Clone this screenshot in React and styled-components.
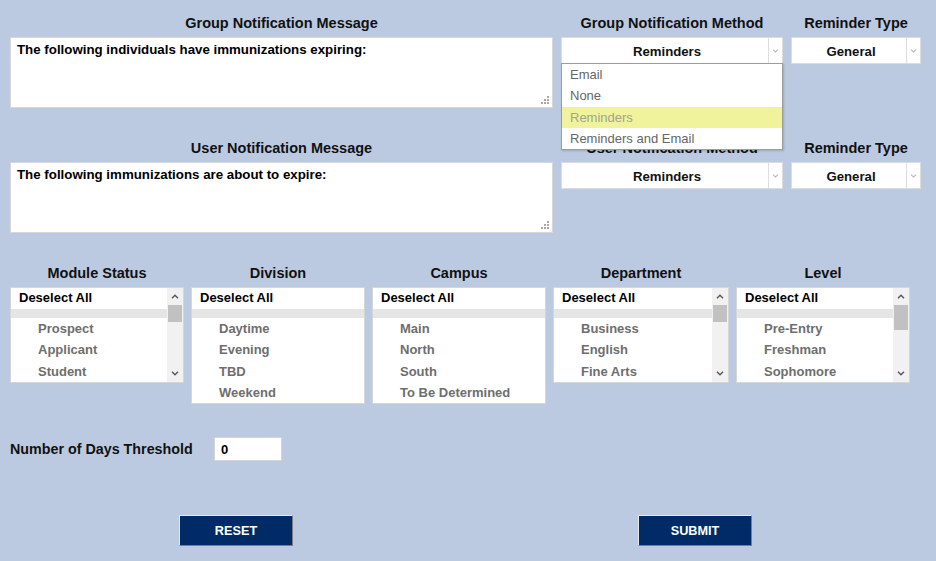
import React from "react";
import styled, { createGlobalStyle } from "styled-components";

const GlobalStyle = createGlobalStyle`
  html, body {
    margin: 0;
    padding: 0;
    background: #bccae1;
  }
  body {
    font-family: "Liberation Sans", Arial, Helvetica, sans-serif;
    color: #111;
  }
`;

const Page = styled.div`
  width: 936px;
  box-sizing: border-box;
  padding: 14px 0 0 10px;
`;

const MessageRow = styled.div`
  display: grid;
  grid-template-columns: 543px 222px 130px;
  column-gap: 8px;
  margin-bottom: 31px;
  position: relative;
  z-index: ${(p) => p.$layer || 1};
`;

const Field = styled.div`
  display: flex;
  flex-direction: column;
  align-items: center;
  min-width: 0;
`;

const Label = styled.div`
  font-weight: bold;
  font-size: 14.5px;
  line-height: 18px;
  margin-bottom: 5px;
  white-space: nowrap;
  text-align: center;
  color: #111;
`;

const MessageBox = styled.div`
  position: relative;
  width: 100%;
  height: 71px;
  box-sizing: border-box;
  border: 1px solid #d8d8d8;
  background: #fff;
`;

const MessageText = styled.textarea`
  display: block;
  width: 100%;
  height: 100%;
  box-sizing: border-box;
  border: none;
  outline: none;
  resize: none;
  background: transparent;
  padding: 4px 6px 3px;
  font-family: "Liberation Sans", Arial, sans-serif;
  font-weight: bold;
  font-size: 13.3px;
  line-height: 16px;
  color: #000;
`;

const Grip = styled.svg`
  position: absolute;
  right: 3px;
  bottom: 3px;
`;

const SelectBox = styled.div`
  position: relative;
  width: 100%;
  height: 27px;
  box-sizing: border-box;
  border: 1px solid #dcdcdc;
  background: #fff;
  display: flex;
`;

const SelectValue = styled.div`
  flex: 1;
  text-align: center;
  font-weight: bold;
  font-size: 13.2px;
  line-height: 25px;
  padding-top: 1px;
  color: #111;
  padding-left: 4px;
`;

const SelectArrow = styled.div`
  width: 13px;
  border-left: 1px solid #dedede;
  display: flex;
  align-items: center;
  justify-content: center;
`;

const Dropdown = styled.ul`
  position: absolute;
  top: 25px;
  left: -1px;
  right: -1px;
  margin: 0;
  padding: 0;
  list-style: none;
  background: #fff;
  border: 1px solid #9d9d9d;
  box-shadow: 1px 1px 2px rgba(0, 0, 0, 0.18);
  z-index: 10;
`;

const Option = styled.li`
  height: 21.25px;
  line-height: 21.25px;
  padding-left: 8px;
  font-size: 13px;
  color: ${(p) => (p.$active ? "#a3a38c" : "#666")};
  background: ${(p) => (p.$active ? "#f0f39b" : "transparent")};
  white-space: nowrap;
`;

const ListsRow = styled.div`
  display: flex;
  align-items: flex-start;
  gap: 7px;
`;

const ListColumn = styled.div`
  width: ${(p) => p.$w}px;
  display: flex;
  flex-direction: column;
  align-items: center;
`;

const ListBox = styled.div`
  width: 100%;
  height: ${(p) => p.$h}px;
  box-sizing: border-box;
  border: 1px solid #d6d6d6;
  background: #fff;
  display: flex;
  overflow: hidden;
`;

const ListBody = styled.div`
  flex: 1;
  min-width: 0;
`;

const DeselectRow = styled.div`
  height: 21px;
  line-height: 20px;
  padding-left: 8px;
  font-weight: bold;
  font-size: 13px;
  color: #000;
`;

const Separator = styled.div`
  height: 9px;
  background: #e5e5e5;
`;

const ListItem = styled.div`
  height: 21.3px;
  line-height: 21.3px;
  padding-left: 27px;
  font-weight: bold;
  font-size: 13px;
  color: #6e6e6e;
  white-space: nowrap;
`;

const ScrollTrack = styled.div`
  width: 16px;
  background: #f1f1f1;
  display: flex;
  flex-direction: column;
`;

const ScrollButton = styled.div`
  height: 17px;
  display: flex;
  align-items: center;
  justify-content: center;
`;

const Thumb = styled.div`
  height: ${(p) => p.$h}px;
  margin: 0 1px;
  background: #c1c1c1;
`;

const TrackFill = styled.div`
  flex: 1;
`;

const ThresholdRow = styled.div`
  display: flex;
  align-items: center;
  margin-top: 33px;
`;

const ThresholdLabel = styled.div`
  width: 204px;
  font-weight: bold;
  font-size: 14.3px;
  color: #111;
`;

const NumberInput = styled.input`
  width: 68px;
  height: 24px;
  box-sizing: border-box;
  border: 1px solid #d4d4d4;
  padding: 0 6px;
  font-family: "Liberation Sans", Arial, sans-serif;
  font-weight: bold;
  font-size: 13px;
  color: #000;
  outline: none;
`;

const ButtonRow = styled.div`
  display: flex;
  gap: 345px;
  padding-left: 169px;
  margin-top: 54px;
`;

const Button = styled.button`
  width: 114px;
  height: 31px;
  box-sizing: border-box;
  background: #002b66;
  color: #fff;
  border: 1px solid;
  border-color: #e8e8e8 #7d7d7d #7d7d7d #e8e8e8;
  font-family: "Liberation Sans", Arial, sans-serif;
  font-weight: bold;
  font-size: 12.7px;
  padding: 0;
  cursor: pointer;
`;

const Chevron = ({ up, color = "#555", w = 8, h = 5 }) => (
  <svg width={w} height={h} viewBox="0 0 8 5">
    <path
      d={up ? "M1 4.2 L4 1.2 L7 4.2" : "M1 0.8 L4 3.8 L7 0.8"}
      fill="none"
      stroke={color}
      strokeWidth="1.4"
    />
  </svg>
);

const ResizeGrip = () => (
  <Grip width="8" height="8" viewBox="0 0 8 8">
    <g fill="#a9a9a9">
      <rect x="6" y="0" width="2" height="2" />
      <rect x="3" y="3" width="2" height="2" />
      <rect x="6" y="3" width="2" height="2" />
      <rect x="0" y="6" width="2" height="2" />
      <rect x="3" y="6" width="2" height="2" />
      <rect x="6" y="6" width="2" height="2" />
    </g>
  </Grip>
);

const Select = ({ value, children }) => (
  <SelectBox>
    <SelectValue>{value}</SelectValue>
    <SelectArrow>
      <Chevron color="#b5b5b5" w={7} h={4} />
    </SelectArrow>
    {children}
  </SelectBox>
);

const methodOptions = ["Email", "None", "Reminders", "Reminders and Email"];

// only the rows visible in the scrolled boxes are listed
const lists = [
  {
    title: "Module Status",
    width: 174,
    height: 96,
    thumb: 17,
    items: ["Prospect", "Applicant", "Student"],
  },
  {
    title: "Division",
    width: 174,
    height: 117,
    items: ["Daytime", "Evening", "TBD", "Weekend"],
  },
  {
    title: "Campus",
    width: 174,
    height: 117,
    items: ["Main", "North", "South", "To Be Determined"],
  },
  {
    title: "Department",
    width: 176,
    height: 96,
    thumb: 17,
    items: ["Business", "English", "Fine Arts"],
  },
  {
    title: "Level",
    width: 174,
    height: 96,
    thumb: 25,
    items: ["Pre-Entry", "Freshman", "Sophomore"],
  },
];

const MultiList = ({ list }) => (
  <ListColumn $w={list.width}>
    <Label>{list.title}</Label>
    <ListBox $h={list.height}>
      <ListBody>
        <DeselectRow>Deselect All</DeselectRow>
        <Separator />
        {list.items.map((item) => (
          <ListItem key={item}>{item}</ListItem>
        ))}
      </ListBody>
      {list.thumb && (
        <ScrollTrack>
          <ScrollButton>
            <Chevron up />
          </ScrollButton>
          <Thumb $h={list.thumb} />
          <TrackFill />
          <ScrollButton>
            <Chevron />
          </ScrollButton>
        </ScrollTrack>
      )}
    </ListBox>
  </ListColumn>
);

const App = () => {
  return (
    <>
      <GlobalStyle />
      <Page>
        <MessageRow $layer={3}>
          <Field>
            <Label>Group Notification Message</Label>
            <MessageBox>
              <MessageText defaultValue="The following individuals have immunizations expiring:" />
              <ResizeGrip />
            </MessageBox>
          </Field>
          <Field>
            <Label>Group Notification Method</Label>
            <Select value="Reminders">
              <Dropdown>
                {methodOptions.map((opt) => (
                  <Option key={opt} $active={opt === "Reminders"}>
                    {opt}
                  </Option>
                ))}
              </Dropdown>
            </Select>
          </Field>
          <Field>
            <Label>Reminder Type</Label>
            <Select value="General" />
          </Field>
        </MessageRow>

        <MessageRow $layer={1}>
          <Field>
            <Label>User Notification Message</Label>
            <MessageBox>
              <MessageText defaultValue="The following immunizations are about to expire:" />
              <ResizeGrip />
            </MessageBox>
          </Field>
          <Field>
            <Label>User Notification Method</Label>
            <Select value="Reminders" />
          </Field>
          <Field>
            <Label>Reminder Type</Label>
            <Select value="General" />
          </Field>
        </MessageRow>

        <ListsRow>
          {lists.map((list) => (
            <MultiList key={list.title} list={list} />
          ))}
        </ListsRow>

        <ThresholdRow>
          <ThresholdLabel>Number of Days Threshold</ThresholdLabel>
          <NumberInput defaultValue="0" />
        </ThresholdRow>

        <ButtonRow>
          <Button>RESET</Button>
          <Button>SUBMIT</Button>
        </ButtonRow>
      </Page>
    </>
  );
};

export default App;
